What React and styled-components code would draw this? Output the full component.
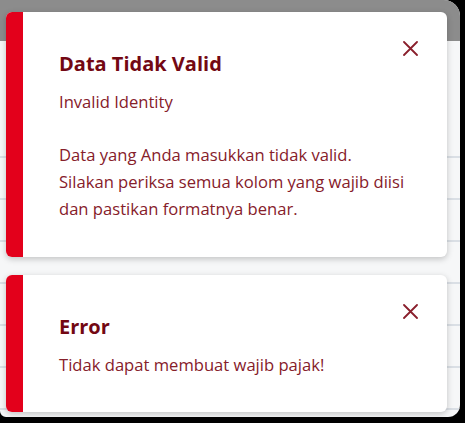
import React from "react";
import styled, { createGlobalStyle } from "styled-components";

const Global = createGlobalStyle`
  html, body { margin: 0; padding: 0; background: #000; }
  body { width: 465px; height: 423px; overflow: hidden; font-family: "Open Sans", "Noto Sans", sans-serif; }
`;

const Window = styled.div`
  position: relative;
  width: 460px;
  height: 417px;
  background: #f6f7f8;
  border-top-right-radius: 16px;
  border-bottom-right-radius: 12px;
  border-bottom-left-radius: 6px;
  overflow: hidden;
  display: flex;
  flex-direction: column;
`;

const TopBand = styled.div`
  height: 41px;
  background: #8c8c8c;
  flex: none;
`;

const Rows = styled.div`
  padding-top: 75px;
  display: flex;
  flex-direction: column;
`;

const Row = styled.div`
  height: 40px;
  border-bottom: 2px solid #dadfe5;
`;

const ToastStack = styled.div`
  position: absolute;
  top: 12px;
  left: 6px;
  width: 441px;
  display: flex;
  flex-direction: column;
  gap: 18px;
`;

const Toast = styled.div`
  position: relative;
  display: flex;
  background: #fff;
  border-radius: 6px;
  overflow: hidden;
  box-shadow: 0 2px 6px rgba(0, 0, 0, 0.22);
`;

const Accent = styled.div`
  width: 17px;
  flex: none;
  background: #e3001b;
`;

const Content = styled.div`
  padding: 38px 40px 34px 36px;
  display: flex;
  flex-direction: column;
  gap: 11px;
`;

const Title = styled.div`
  font-size: 20px;
  font-weight: 700;
  line-height: 28px;
  color: #730813;
`;

const Message = styled.div`
  font-size: 16.6px;
  line-height: 26.7px;
  color: #86202a;
  white-space: pre;
`;

const CloseButton = styled.button`
  position: absolute;
  top: 29px;
  right: 29px;
  width: 15px;
  height: 15px;
  padding: 0;
  border: 0;
  background: transparent;
  display: flex;
  cursor: pointer;
`;

const CloseIcon = () => (
  <svg width="15" height="15" viewBox="0 0 15 15">
    <path d="M1 1 L14 14 M14 1 L1 14" stroke="#8a1f2c" strokeWidth="1.8" strokeLinecap="round" />
  </svg>
);

const toasts = [
  {
    title: "Data Tidak Valid",
    message:
      "Invalid Identity\n\nData yang Anda masukkan tidak valid.\nSilakan periksa semua kolom yang wajib diisi\ndan pastikan formatnya benar.",
  },
  { title: "Error", message: "Tidak dapat membuat wajib pajak!" },
];

export default function App() {
  return (
    <>
      <Global />
      <Window>
        <TopBand />
        <Rows>
          {Array.from({ length: 8 }).map((_, i) => (
            <Row key={i} />
          ))}
        </Rows>
        <ToastStack>
          {toasts.map((t, i) => (
            <Toast key={i}>
              <Accent />
              <Content>
                <Title>{t.title}</Title>
                <Message>{t.message}</Message>
              </Content>
              <CloseButton aria-label="Tutup">
                <CloseIcon />
              </CloseButton>
            </Toast>
          ))}
        </ToastStack>
      </Window>
    </>
  );
}
